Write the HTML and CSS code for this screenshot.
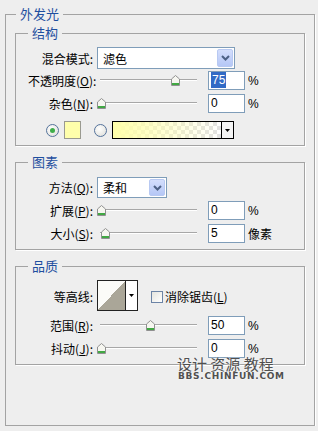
FILE: index.html
```html
<!DOCTYPE html>
<html lang="zh-CN">
<head>
    <meta charset="UTF-8">
    <title>外发光</title>
    <link rel="stylesheet" href="styles.css">
</head>
<body>
    <fieldset class="panel">
        <legend>外发光</legend>

        <fieldset class="group">
            <legend>结构</legend>
            <div class="row row-select">
                <span class="label">混合模式:</span>
                <div class="select select-wide">
                    <span>滤色</span>
                    <span class="select-btn"><svg width="9" height="6" viewBox="0 0 9 6"><path d="M1 1 L4.5 4.5 L8 1" fill="none" stroke="#4d6185" stroke-width="2"/></svg></span>
                </div>
            </div>
            <div class="row">
                <span class="label">不透明度(<u>O</u>):</span>
                <div class="slider">
                    <div class="track"></div>
                    <span class="thumb" style="left:74px"></span>
                </div>
                <div class="field"><span class="sel">75</span></div>
                <span class="unit">%</span>
            </div>
            <div class="row">
                <span class="label">杂色(<u>N</u>):</span>
                <div class="slider">
                    <div class="track"></div>
                    <span class="thumb" style="left:0px"></span>
                </div>
                <div class="field">0</div>
                <span class="unit">%</span>
            </div>
            <div class="row row-color">
                <span class="radio checked"></span>
                <span class="swatch"></span>
                <span class="radio"></span>
                <div class="gradient">
                    <span class="gradient-fill"></span>
                    <span class="drop"><svg width="5" height="3" viewBox="0 0 5 3"><path d="M0 0 H5 L2.5 3 Z" fill="#000"/></svg></span>
                </div>
            </div>
        </fieldset>

        <fieldset class="group">
            <legend>图素</legend>
            <div class="row">
                <span class="label">方法(<u>Q</u>):</span>
                <div class="select select-narrow">
                    <span>柔和</span>
                    <span class="select-btn"><svg width="9" height="6" viewBox="0 0 9 6"><path d="M1 1 L4.5 4.5 L8 1" fill="none" stroke="#4d6185" stroke-width="2"/></svg></span>
                </div>
            </div>
            <div class="row">
                <span class="label">扩展(<u>P</u>):</span>
                <div class="slider">
                    <div class="track"></div>
                    <span class="thumb" style="left:0px"></span>
                </div>
                <div class="field">0</div>
                <span class="unit">%</span>
            </div>
            <div class="row">
                <span class="label">大小(<u>S</u>):</span>
                <div class="slider">
                    <div class="track"></div>
                    <span class="thumb" style="left:4px"></span>
                </div>
                <div class="field">5</div>
                <span class="unit">像素</span>
            </div>
        </fieldset>

        <fieldset class="group">
            <legend>品质</legend>
            <div class="row row-contour">
                <span class="label">等高线:</span>
                <div class="contour">
                    <span class="contour-preview"></span>
                    <span class="drop"><svg width="5" height="3" viewBox="0 0 5 3"><path d="M0 0 H5 L2.5 3 Z" fill="#000"/></svg></span>
                </div>
                <span class="checkbox"></span>
                <span class="check-label">消除锯齿(<u>L</u>)</span>
            </div>
            <div class="row">
                <span class="label">范围(<u>R</u>):</span>
                <div class="slider">
                    <div class="track"></div>
                    <span class="thumb" style="left:49px"></span>
                </div>
                <div class="field">50</div>
                <span class="unit">%</span>
            </div>
            <div class="row">
                <span class="label">抖动(<u>J</u>):</span>
                <div class="slider">
                    <div class="track"></div>
                    <span class="thumb" style="left:0px"></span>
                </div>
                <div class="field">0</div>
                <span class="unit">%</span>
            </div>
        </fieldset>
    </fieldset>

    <div class="watermark">
        <div class="wm-title">设计 资源 教程</div>
        <div class="wm-url">BBS.CHINFUN.COM</div>
    </div>
</body>
</html>
```

FILE: styles.css
```css
body {
    margin: 0;
    padding: 7px 0 0 5px;
    background-color: #eeeeee;
    font-family: "Noto Sans CJK SC", sans-serif;
    font-size: 12px;
    color: #000;
    position: relative;
    overflow: hidden;
}
fieldset {
    margin: 0;
    min-inline-size: 0;
    border: 1px solid #a3a3a3;
    box-shadow: 1px 1px 0 #fff;
}
legend {
    padding: 0 4px;
    margin-left: 1px;
    font-size: 13px;
    line-height: 14px;
    color: #1f4f9f;
}
.panel {
    box-sizing: border-box;
    width: 310px;
    padding: 5px 9px 60px 9px;
}
.group {
    padding: 7px 8px 4px 12px;
}
.group + .group {
    margin-top: 9px;
}
.group legend {
    margin-left: 0;
}
.row {
    display: flex;
    align-items: center;
    height: 23px;
}
.row-select {
    height: 22px;
}
.row-color {
    height: 22px;
    margin-top: 4px;
    padding-left: 18px;
}
.row-contour {
    height: 34px;
    align-items: flex-start;
}
.label {
    width: 65px;
    text-align: right;
    margin-right: 4px;
    line-height: 17px;
    white-space: nowrap;
}
.row-contour .label {
    margin-top: 8px;
}
u {
    text-decoration-thickness: 1px;
    text-underline-offset: 1px;
}

/* select */
.select {
    box-sizing: border-box;
    display: flex;
    align-items: center;
    justify-content: space-between;
    border: 1px solid #7f9db9;
    background-color: #fff;
    padding: 0 1px 0 5px;
}
.select-wide {
    width: 138px;
    height: 22px;
}
.select-narrow {
    width: 70px;
    height: 21px;
}
.select-btn {
    box-sizing: border-box;
    width: 16px;
    height: calc(100% - 2px);
    display: flex;
    align-items: center;
    justify-content: center;
    background: linear-gradient(#d4defc, #b5c7f6);
    border: 1px solid #b8c9f2;
    border-radius: 2px;
}

/* slider */
.slider {
    position: relative;
    width: 106px;
    height: 23px;
}
.track {
    margin: 10px 6px 0 3px;
    height: 1px;
    background-color: #a7a7a7;
    border-bottom: 1px solid #fff;
}
.thumb {
    position: absolute;
    top: 6px;
    width: 9px;
    height: 11px;
    background: url("data:image/svg+xml;utf8,<svg xmlns='http://www.w3.org/2000/svg' width='9' height='11'><path d='M0.5 4 L4.5 0.5 L8.5 4 V10.5 H0.5 Z' fill='%23f6f6f0' stroke='%23909090'/><rect x='1' y='8' width='7' height='2' fill='%2341a843'/></svg>") no-repeat;
}

/* input */
.field {
    box-sizing: border-box;
    width: 37px;
    height: 19px;
    margin-left: 5px;
    border: 1px solid #7f9db9;
    background-color: #fff;
    padding-left: 2px;
    font-family: "Liberation Sans", sans-serif;
    font-size: 12px;
    line-height: 17px;
}
.sel {
    background-color: #316ac5;
    color: #fff;
    padding: 1px 1px;
}
.unit {
    margin-left: 3px;
    font-family: "Liberation Sans", "Noto Sans CJK SC", sans-serif;
}

/* colour row */
.radio {
    box-sizing: border-box;
    width: 13px;
    height: 13px;
    border-radius: 50%;
    border: 1px solid #55739c;
    background: radial-gradient(circle at 40% 35%, #fff, #dcdcd6);
    display: flex;
    align-items: center;
    justify-content: center;
}
.radio.checked::after {
    content: "";
    width: 5px;
    height: 5px;
    border-radius: 50%;
    background-color: #3fae4a;
}
.swatch {
    box-sizing: border-box;
    width: 17px;
    height: 18px;
    margin: 0 13px 0 5px;
    border: 1px solid #9a9a90;
    background-color: #ffffab;
}
.gradient {
    box-sizing: border-box;
    display: flex;
    width: 122px;
    height: 18px;
    margin-left: 5px;
    border: 1px solid #000;
}
.gradient-fill {
    flex: 1;
    border-right: 1px solid #000;
    background:
        linear-gradient(to right, #ffffaa, rgba(255, 255, 170, 0)),
        conic-gradient(#e2e2e2 25%, #fff 0 50%, #e2e2e2 0 75%, #fff 0) 0 0 / 8px 8px;
}
.drop {
    width: 11px;
    display: flex;
    align-items: center;
    justify-content: center;
    background-color: #f4f4f4;
}

/* contour */
.contour {
    box-sizing: border-box;
    display: flex;
    width: 41px;
    height: 31px;
    border: 1px solid #222;
}
.contour-preview {
    flex: 1;
    border-right: 1px solid #222;
    background: linear-gradient(to bottom right, #fbfbf8 50%, #aaa698 50%);
}
.contour .drop {
    background-color: #fff;
}
.checkbox {
    box-sizing: border-box;
    width: 12px;
    height: 12px;
    margin: 11px 2px 0 13px;
    border: 1px solid #6c84a6;
    background: linear-gradient(135deg, #e4e4de, #fff);
}
.check-label {
    margin-top: 8px;
    line-height: 17px;
}

/* watermark */
.watermark {
    position: absolute;
    left: 177px;
    top: 357px;
    color: #505050;
    text-shadow: 0 0 2px #fff;
}
.wm-title {
    font-size: 15px;
    line-height: 14px;
}
.wm-url {
    font-family: "DejaVu Sans", sans-serif;
    font-weight: bold;
    font-size: 9px;
    line-height: 11px;
    letter-spacing: 0.7px;
    margin-left: 1px;
}
```
